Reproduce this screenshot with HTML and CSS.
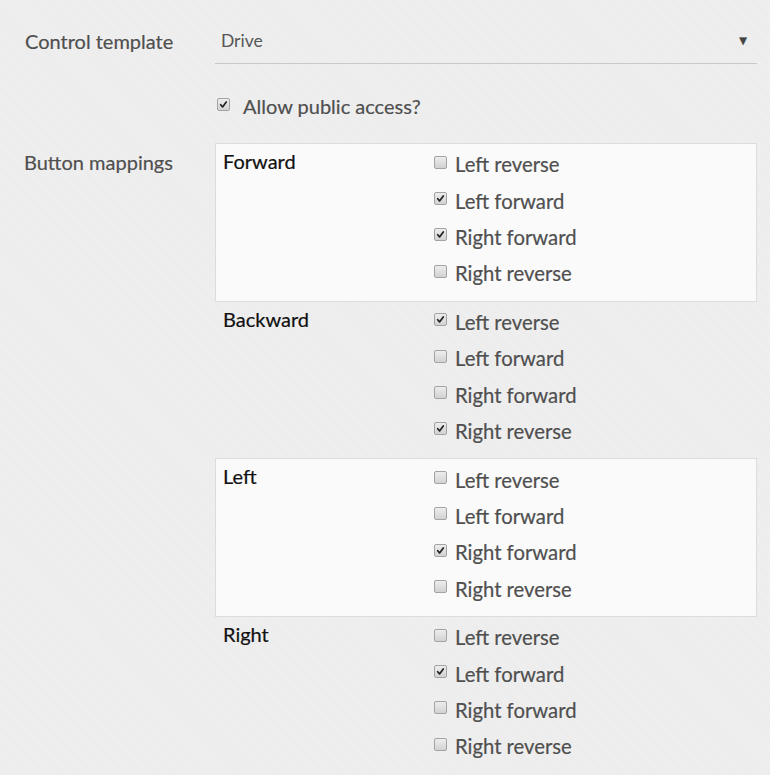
FILE: index.html
```html
<!DOCTYPE html>
<html>
<head>
<meta charset="utf-8">
<link rel="stylesheet" href="styles.css">
</head>
<body>
<form class="form">
  <div class="row row-select">
    <div class="label">Control template</div>
    <div class="field">
      <div class="select"><span class="select-value">Drive</span><span class="select-arrow">&#9660;</span></div>
    </div>
  </div>
  <div class="row row-check">
    <div class="label"></div>
    <div class="field">
      <label class="check"><span class="cb on"><svg viewBox="0 0 13 13"><path d="M3.2 6.8 L5.4 9.4 L9.8 3.4" /></svg></span><span class="check-text big">Allow public access?</span></label>
    </div>
  </div>
  <div class="row row-map">
    <div class="label">Button mappings</div>
    <div class="field">
      <div class="mappings">
        <div class="group alt">
          <div class="group-name">Forward</div>
          <div class="items">
            <label class="check item"><span class="cb"></span><span class="check-text">Left reverse</span></label>
            <label class="check item"><span class="cb on"><svg viewBox="0 0 13 13"><path d="M3.2 6.8 L5.4 9.4 L9.8 3.4" /></svg></span><span class="check-text">Left forward</span></label>
            <label class="check item"><span class="cb on"><svg viewBox="0 0 13 13"><path d="M3.2 6.8 L5.4 9.4 L9.8 3.4" /></svg></span><span class="check-text">Right forward</span></label>
            <label class="check item"><span class="cb"></span><span class="check-text">Right reverse</span></label>
          </div>
        </div>
        <div class="group">
          <div class="group-name">Backward</div>
          <div class="items">
            <label class="check item"><span class="cb on"><svg viewBox="0 0 13 13"><path d="M3.2 6.8 L5.4 9.4 L9.8 3.4" /></svg></span><span class="check-text">Left reverse</span></label>
            <label class="check item"><span class="cb"></span><span class="check-text">Left forward</span></label>
            <label class="check item"><span class="cb"></span><span class="check-text">Right forward</span></label>
            <label class="check item"><span class="cb on"><svg viewBox="0 0 13 13"><path d="M3.2 6.8 L5.4 9.4 L9.8 3.4" /></svg></span><span class="check-text">Right reverse</span></label>
          </div>
        </div>
        <div class="group alt">
          <div class="group-name">Left</div>
          <div class="items">
            <label class="check item"><span class="cb"></span><span class="check-text">Left reverse</span></label>
            <label class="check item"><span class="cb"></span><span class="check-text">Left forward</span></label>
            <label class="check item"><span class="cb on"><svg viewBox="0 0 13 13"><path d="M3.2 6.8 L5.4 9.4 L9.8 3.4" /></svg></span><span class="check-text">Right forward</span></label>
            <label class="check item"><span class="cb"></span><span class="check-text">Right reverse</span></label>
          </div>
        </div>
        <div class="group">
          <div class="group-name">Right</div>
          <div class="items">
            <label class="check item"><span class="cb"></span><span class="check-text">Left reverse</span></label>
            <label class="check item"><span class="cb on"><svg viewBox="0 0 13 13"><path d="M3.2 6.8 L5.4 9.4 L9.8 3.4" /></svg></span><span class="check-text">Left forward</span></label>
            <label class="check item"><span class="cb"></span><span class="check-text">Right forward</span></label>
            <label class="check item"><span class="cb"></span><span class="check-text">Right reverse</span></label>
          </div>
        </div>
      </div>
    </div>
  </div>
</form>
</body>
</html>
```
FILE: styles.css
```css
html, body {
  margin: 0;
  padding: 0;
}
body {
  background-color: #ececec;
  background-image: repeating-linear-gradient(45deg, rgba(255,255,255,0.18) 0 1px, rgba(0,0,0,0) 1px 2px);
  font-family: Lato, "Open Sans", sans-serif;
  color: #4f4f4f;
  width: 770px;
  height: 775px;
  overflow: hidden;
  -webkit-text-stroke: 0.2px currentColor;
}
.form {
  padding-top: 19px;
}
.row {
  display: grid;
  grid-template-columns: 215px 542px;
}
.label {
  font-size: 20px;
  color: #4f4f4f;
  padding-left: 25px;
}
.row-select .label {
  line-height: 44px;
}
.select {
  height: 45px;
  box-sizing: border-box;
  border-bottom: 1px solid #c8c8c8;
  display: flex;
  align-items: center;
  justify-content: space-between;
  padding: 0 10px 2px 6px;
}
.select-value {
  font-size: 17.5px;
  color: #555;
  -webkit-text-stroke: 0;
}
.select-arrow {
  font-size: 10px;
  color: #444;
  font-family: "DejaVu Sans", sans-serif;
}
.row-check {
  padding-top: 31px;
}
.row-check .field {
  padding-left: 2px;
}
.check {
  display: flex;
  align-items: center;
  height: 22px;
}
.cb {
  width: 13px;
  height: 13px;
  box-sizing: border-box;
  border: 1px solid #a3a3a3;
  border-radius: 2px;
  background: linear-gradient(#ededed, #d2d2d2);
  display: inline-block;
  position: relative;
  top: -2px;
  flex: none;
}
.cb svg {
  display: block;
  width: 11px;
  height: 11px;
}
.cb path {
  fill: none;
  stroke: #222;
  stroke-width: 2;
  stroke-linecap: round;
  stroke-linejoin: round;
}
.check-text {
  margin-left: 13px;
  font-size: 20px;
  color: #4f4f4f;
}
.row-map {
  padding-top: 26px;
}
.row-map .label {
  padding-left: 24px;
  padding-top: 8px;
  line-height: 22px;
}
.group {
  box-sizing: border-box;
  height: 158.7px;
  display: grid;
  grid-template-columns: 218px 1fr;
  border: 1px solid transparent;
  margin-top: -1px;
}
.group:first-child {
  margin-top: 0;
}
.group.alt {
  background: #fafafa;
  border-color: #dcdcdc;
}
.group-name {
  padding-left: 7px;
  padding-top: 6px;
  font-size: 20px;
  line-height: 22px;
  color: #111;
}
.items {
  padding-top: 2px;
}
.item {
  height: 36.35px;
}
.item .check-text {
  margin-left: 8px;
  font-size: 20.3px;
}
```
